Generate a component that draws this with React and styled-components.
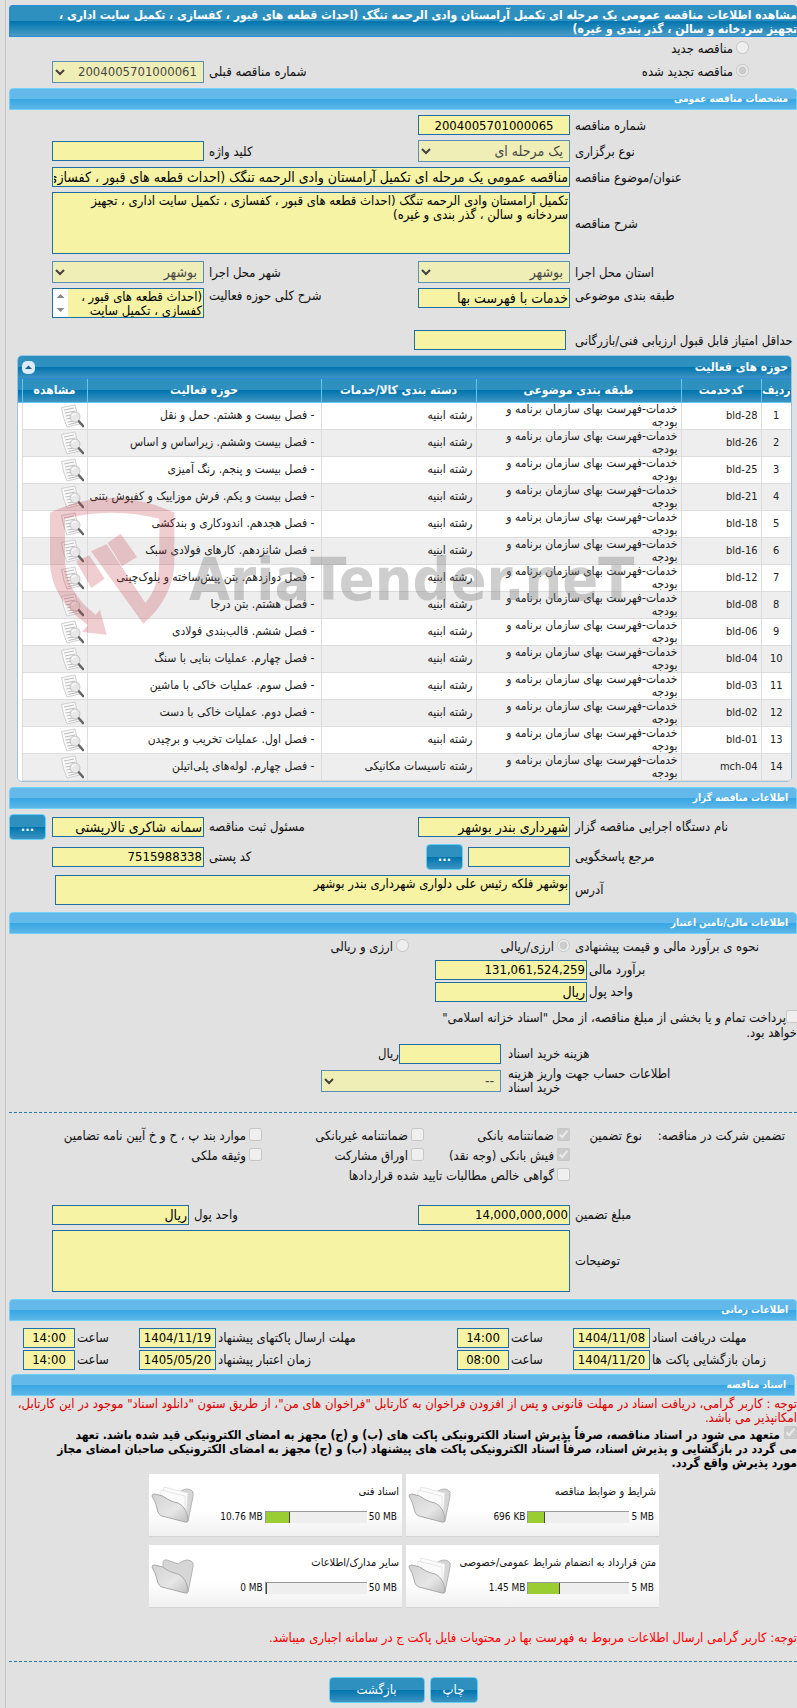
import React from "react";
import styled, { createGlobalStyle } from "styled-components";

const Global = createGlobalStyle`
  * { box-sizing: border-box; }
  body {
    margin: 0;
    background: #e1e1e1;
    color: #111;
    font: 13px/14px Tahoma, "DejaVu Sans Condensed", "DejaVu Sans", sans-serif;
  }
  button, input, select, textarea { font-family: inherit; }
`;

const Page = styled.main`
  direction: rtl;
  margin-left: 5px;
  padding: 5px 0 5px 3px;
  border-left: 1px solid #c6c6c6;
  overflow: hidden;
`;

const Title = styled.h1`
  margin: 0;
  height: 32px;
  padding-top: 2px;
  overflow: hidden;
  border: 1px solid #2a8ad8;
  border-width: 1px 0 1px 1px;
  border-radius: 4px 4px 0 0;
  background: linear-gradient(#2e90bf 50%, #0074ad 50%, #4a9cc6);
  color: #fff;
  font-size: 12px;
  line-height: 14px;
  white-space: nowrap;
`;

const Line = styled.span`
  display: block;
  white-space: nowrap;
`;

const Bar = styled.h2`
  margin: ${(p) => p.$mt}px ${(p) => p.$inset || 0}px 0;
  height: 22px;
  padding: 0 8px;
  border: 1px solid #6fd0f8;
  border-radius: 4px 4px 0 0;
  background: linear-gradient(#63b9ea 50%, #36a6e2 50%, #5cb6e8);
  color: #fff;
  font-size: 10px;
  line-height: 20px;
`;

const Row = styled.div`
  display: grid;
  grid-template-columns: minmax(0, 227fr) 152px minmax(0, 214fr) 152px 43px;
  align-items: ${(p) => p.$align || "center"};
  margin-top: ${(p) => p.$mt || 5}px;
`;

const ScoreRow = styled(Row)`
  grid-template-columns: minmax(0, 231fr) 152px minmax(0, 405fr);
`;

const Label = styled.label`
  padding: 1px 0 0 ${(p) => p.$gap || 5}px;
  text-align: left;
  white-space: nowrap;
`;

const field = `
  width: 100%;
  margin: 0;
  border: 1px solid #1f6fa5;
  border-radius: 0;
  background: #f6f4a4;
  color: #000;
`;

const Input = styled.input`
  ${field}
  height: 20px;
  padding: 0 1px;
  font-size: ${(p) => (/[ا-ی]/.test(p.value) ? 14 : 13)}px;
  text-align: ${(p) => p.$align || "right"};
  width: ${(p) => (p.$w ? p.$w + "px" : "100%")};
`;

const Select = styled.select`
  ${field}
  height: 22px;
  padding: 0 2px;
  font-size: ${(p) => (p.$latin ? 13 : 14)}px;
  opacity: 0.7;
`;

const Area = styled.textarea`
  ${field}
  display: block;
  height: ${(p) => p.$h}px;
  padding: 1px;
  font-size: 13px;
  line-height: 14px;
  resize: none;
  overflow: hidden;
`;

const Wide = styled.div`
  grid-column: 2 / 5;
  margin-left: ${(p) => p.$pull || 0}px;
`;

const ScrollBox = styled.div`
  ${field}
  display: flex;
  height: 30px;
  textarea {
    flex: 1;
    min-width: 0;
    height: 28px;
    border: 0;
  }
`;

const Arrows = styled.svg`
  flex: none;
  width: 15px;
  height: 28px;
  background: #fff;
`;

const Choice = styled.label`
  display: flex;
  align-items: center;
  gap: ${(p) => p.$gap ?? 3}px;
  padding-right: ${(p) => p.$pr || 0}px;
  white-space: nowrap;
  input {
    flex: none;
    width: 13px;
    height: 13px;
    margin: 0 0 3px;
  }
`;

const TopRows = styled.div`
  display: grid;
  grid-template-columns: minmax(0, 379fr) minmax(0, 214fr) 152px 43px;
  align-items: center;
  grid-auto-rows: 23px;
  > :first-child, > :nth-child(2) { padding-right: 48px; grid-column: 1; }
`;

const Grid = styled.section`
  position: relative;
  margin: 5px 5px 0 8px;
  border: 1px solid #9cc4e2;
  border-radius: 5px;
  overflow: hidden;
  background: #fff;
`;

const blue = "linear-gradient(#2e90bf 50%, #0074ad 50%, #3d93c2)";

const GridHead = styled.header`
  display: flex;
  align-items: center;
  justify-content: space-between;
  height: 23px;
  padding: 0 3px 0 4px;
  border-bottom: 1px solid #2a8ad8;
  background: ${blue};
  color: #fff;
  h3 { margin: 0; font-size: 12px; }
`;

const Collapse = styled.button`
  width: 13px;
  height: 13px;
  padding: 0;
  border: 0;
  border-radius: 5px;
  background: #dceaf8;
  svg { display: block; }
`;

const Table = styled.table`
  width: 100%;
  table-layout: fixed;
  border-collapse: collapse;
  font-size: 12px;
  line-height: 13px;
  th {
    height: 23px;
    padding: 0;
    border-left: 1px solid #62c6f0;
    border-bottom: 1px solid #62c6f0;
    background: ${blue};
    color: #fff;
    white-space: nowrap;
  }
  td {
    height: 27px;
    padding: 0 3px;
    border-left: 1px solid #dcdcdc;
    border-bottom: 1px solid #dcdcdc;
    color: #222;
  }
  tbody tr:nth-child(even) td { background: #eeeeee; }
  th:last-child, td:last-child { border-left: 0; }
  tbody tr td:last-child { background: #fff; border-bottom: 0; padding: 0; }
  td:first-child { text-align: center; font-size: 11px; }
  td:nth-child(2) { direction: ltr; text-align: right; font-size: 11px; }
  td:nth-child(3) { padding-left: 24px; }
  td:nth-child(5) { padding-right: 6px; white-space: nowrap; }
`;

const ViewButton = styled.button`
  display: block;
  margin: 0;
  padding: 0;
  border: 0;
  background: none;
  svg { display: block; }
`;

const Watermark = styled.svg`
  position: absolute;
  left: 28px;
  top: 140px;
  width: 620px;
  height: 150px;
  pointer-events: none;
`;

const Button = styled.button`
  width: ${(p) => p.$w}px;
  height: 26px;
  padding: 0;
  border: 1px solid #66cff5;
  border-radius: 4px;
  background: linear-gradient(#2e90bf 50%, #0074ad 50%, #3d93c2);
  color: #fff;
  font-size: 13px;
  font-weight: ${(p) => (p.$bold ? 700 : 400)};
`;

const ButtonCell = styled.div`
  display: flex;
  justify-content: ${(p) => (p.$end ? "flex-end" : "flex-start")};
  align-items: center;
  gap: 5px;
`;

const MoneyRow = styled.div`
  display: grid;
  grid-template-columns: minmax(0, 210fr) 152px minmax(0, 426fr);
  align-items: center;
  margin-top: ${(p) => p.$mt}px;
`;

const CostRow = styled.div`
  display: grid;
  grid-template-columns: minmax(0, 296fr) 180px minmax(0, 312fr);
  align-items: center;
  margin-top: ${(p) => p.$mt}px;
`;

const CostLabel = styled.label`
  width: 170px;
  margin-right: auto;
  padding-left: 7px;
  text-align: left;
`;

const CostField = styled.div`
  display: flex;
  align-items: center;
`;

const Treasury = styled.div`
  margin-top: 8px;
  height: 29px;
  label { margin-right: -2px; }
`;

const Dashes = styled.hr`
  height: 0;
  margin: ${(p) => p.$mt}px 0 0;
  border: 0;
  border-top: 1px dashed #2a7ab0;
`;

const Guarantee = styled.fieldset`
  display: grid;
  grid-template-columns: minmax(0, 139fr) 88px 146px 162px minmax(0, 253fr);
  grid-auto-rows: 20px;
  margin: 13px 0 0;
  padding: 0;
  border: 0;
  white-space: nowrap;
  > strong { font-weight: 400; padding-right: 12px; line-height: 20px; }
  > span { padding-right: 16px; line-height: 20px; }
  ${Choice}:nth-of-type(4) { grid-column: 3; }
  ${Choice}:nth-of-type(7) { grid-column: 3; }
`;

const PledgeRow = styled(Row)`
  grid-template-columns: minmax(0, 227fr) 152px minmax(0, 229fr) 137px 43px;
`;

const TimeRow = styled.div`
  display: grid;
  grid-template-columns:
    minmax(0, 147fr) 77px minmax(0, 64fr) 52px minmax(0, 241fr) 77px
    minmax(0, 64fr) 52px 14px;
  align-items: center;
  margin-top: ${(p) => p.$mt}px;
`;

const Notice = styled.p`
  margin: ${(p) => p.$mt}px 0 0;
  color: ${(p) => p.$color};
`;

const Pledge = styled.label`
  display: block;
  margin-top: 1px;
  font-size: 12px;
  font-weight: 700;
  color: #000;
  input {
    width: 13px;
    height: 13px;
    margin: 0 0 0 4px;
    vertical-align: 0;
  }
`;

const Cards = styled.div`
  display: grid;
  grid-template-columns: 253px 253px;
  gap: 8px 4px;
  justify-content: center;
  margin: 4px 0 0 0;
  padding-right: 20px;
  padding-left: 22px;
`;

const Card = styled.article`
  display: flex;
  justify-content: space-between;
  height: 63px;
  padding: 11px 3px 0 2px;
  border-bottom: 1px solid #d4d4d4;
  background: linear-gradient(#fff 60%, #f0f0f0);
  font-size: 11px;
  h4 { margin: 0 0 12px; font: inherit; line-height: 14px; white-space: nowrap; }
`;

const Usage = styled.div`
  display: flex;
  align-items: center;
  gap: 2px;
  direction: ltr;
  justify-content: flex-end;
  font-size: 10px;
  line-height: 12px;
  padding-right: 2px;
`;

const Track = styled.div`
  width: 102px;
  height: 12px;
  border-top: 1px solid #999;
  border-left: 1px solid #999;
  background: #eee;
`;

const Fill = styled.div`
  height: 11px;
  border-right: 1px solid #444;
  background: #9acd32;
`;

const Footer = styled.footer`
  display: flex;
  justify-content: center;
  gap: 5px;
  margin-top: 15px;
`;

const P = "خدمات-فهرست بهای سازمان برنامه و بودجه";
const A = "رشته ابنیه";
const rows = [
  ["bld-28", A, "فصل بیست و هشتم. حمل و نقل"],
  ["bld-26", A, "فصل بیست وششم. زیراساس و اساس"],
  ["bld-25", A, "فصل بیست و پنجم. رنگ آمیزی"],
  ["bld-21", A, "فصل بیست و یکم. فرش موزاییک و کفپوش بتنی"],
  ["bld-18", A, "فصل هجدهم. اندودکاری و بندکشی"],
  ["bld-16", A, "فصل شانزدهم. کارهای فولادی سبک"],
  ["bld-12", A, "فصل دوازدهم. بتن پیش‌ساخته و بلوک‌چینی"],
  ["bld-08", A, "فصل هشتم. بتن درجا"],
  ["bld-06", A, "فصل ششم. قالب‌بندی فولادی"],
  ["bld-04", A, "فصل چهارم. عملیات بنایی با سنگ"],
  ["bld-03", A, "فصل سوم. عملیات خاکی با ماشین"],
  ["bld-02", A, "فصل دوم. عملیات خاکی با دست"],
  ["bld-01", A, "فصل اول. عملیات تخریب و برچیدن"],
  ["mch-04", "رشته تاسیسات مکانیکی", "فصل چهارم. لوله‌های پلی‌اتیلن"],
];

const cards = [
  ["شرایط و ضوابط مناقصه", "5 MB", "696 KB", 16, true],
  ["اسناد فنی", "50 MB", "10.76 MB", 24, true],
  ["متن قرارداد به انضمام شرایط عمومی/خصوصی", "5 MB", "1.45 MB", 31, true],
  ["سایر مدارک/اطلاعات", "50 MB", "0 MB", 1, false],
];

const ViewIcon = () => (
  <svg width="24" height="24" viewBox="0 0 24 24" fill="none">
    <path d="M1.500 3.500 L15 1 Q17 10 20 20 L7 23 Q3 14 1.500 3.500Z" fill="#fafafa" stroke="#c4c4c4" strokeWidth=".8" />
    <path d="M4 6l10-2M5 9l10-2M5.500 12l6-1M6.500 15l5-1M7.500 18l6-1M8.500 20.500l9-2" stroke="#b4b4b4" strokeWidth=".9" />
    <circle cx="15" cy="13" r="5" fill="#e6e6e6" fillOpacity=".9" stroke="#bbb" strokeWidth=".8" />
    <path d="M12 12q1-3 4-2" stroke="#fff" strokeWidth="1.200" />
    <path d="M19 17.500l4 4.500" stroke="#666" strokeWidth="2.600" strokeLinecap="round" />
  </svg>
);

const Folder = ({ papers }) => (
  <svg width="46" height="46" viewBox="0 0 46 46">
    <defs>
      <linearGradient id="folderFront" x1="0" y1="0" x2="1" y2="1">
        <stop offset="0" stopColor="#d2d2d2" />
        <stop offset=".6" stopColor="#e6e6e6" />
        <stop offset="1" stopColor="#bdbdbd" />
      </linearGradient>
    </defs>
    <path d="M12 6 Q13 3 16 4 L27 8 Q35 2 40 5 Q43 6 42 11 L37 36 L13 28Z" fill="#d6d6d6" stroke="#b4b4b4" />
    {papers && (
      <g fill="#fbfbfb" stroke="#dcdcdc" strokeWidth=".7">
        <path d="M13 2 L37 8 L35 31 L9 22Z" />
        <path d="M10 5 L34 11 L34 31 L9 22Z" />
      </g>
    )}
    <path d="M1 11 Q1 9 4 9 Q12 10 18 15 Q22 17 27 18 Q36 22 37 35 Q37 38 34 37 L11 31 Q8 30 7 27 Q5 17 1 11Z" fill="url(#folderFront)" stroke="#a9a9a9" />
  </svg>
);

function Pick({ id, latin, children }) {
  return (
    <Select id={id} $latin={latin} disabled>
      <option>{children}</option>
    </Select>
  );
}

export default function App() {
  return (
    <Page>
      <Global />
      <Title>
        <Line>مشاهده اطلاعات مناقصه عمومی یک مرحله ای تکمیل آرامستان وادی الرحمه تنگک (احداث قطعه های قبور ، کفسازی ، تکمیل سایت اداری ،</Line>
        <Line>تجهیز سردخانه و سالن ، گذر بندی و غیره)</Line>
      </Title>
      <TopRows>
        <Choice><input type="radio" name="kind" disabled />مناقصه جدید</Choice>
        <Choice><input type="radio" name="kind" disabled defaultChecked />مناقصه تجدید شده</Choice>
        <Label htmlFor="prev">شماره مناقصه قبلی</Label>
        <Pick id="prev" latin>2004005701000061</Pick>
      </TopRows>

      <Bar $mt={5}>مشخصات مناقصه عمومی</Bar>
      <Row>
        <Label htmlFor="num">شماره مناقصه</Label>
        <Input id="num" readOnly $align="center" value="2004005701000065" />
      </Row>
      <Row>
        <Label htmlFor="type">نوع برگزاری</Label>
        <Pick id="type">یک مرحله ای</Pick>
        <Label htmlFor="key">کلید واژه</Label>
        <Input id="key" readOnly value="" />
      </Row>
      <Row>
        <Label htmlFor="subject">عنوان/موضوع مناقصه</Label>
        <Wide>
          <Input id="subject" readOnly value="مناقصه عمومی یک مرحله ای تکمیل آرامستان وادی الرحمه تنگک (احداث قطعه های قبور ، کفسازی ، تکمیل سایت اداری ، تجهیز سردخانه و سالن ، گذر بندی و غیره)" />
        </Wide>
      </Row>
      <Row>
        <Label htmlFor="desc">شرح مناقصه</Label>
        <Wide>
          <Area id="desc" readOnly $h={62} value="تکمیل آرامستان وادی الرحمه تنگک (احداث قطعه های قبور ، کفسازی ، تکمیل سایت اداری ، تجهیز سردخانه و سالن ، گذر بندی و غیره)" />
        </Wide>
      </Row>
      <Row $mt={7}>
        <Label htmlFor="prov">استان محل اجرا</Label>
        <Pick id="prov">بوشهر</Pick>
        <Label htmlFor="city">شهر محل اجرا</Label>
        <Pick id="city">بوشهر</Pick>
      </Row>
      <Row $align="start">
        <Label htmlFor="cat">طبقه بندی موضوعی</Label>
        <Input id="cat" readOnly value="خدمات با فهرست بها" />
        <Label htmlFor="scope">شرح کلی حوزه فعالیت</Label>
        <ScrollBox>
          <Area id="scope" readOnly $h={28} value={"(احداث قطعه های قبور ،\nکفسازی ، تکمیل سایت"} />
          <Arrows viewBox="0 0 15 28">
            <path d="M3.500 9 L7.500 5 L11.500 9Z M3.500 19 L7.500 23 L11.500 19Z" fill="#8a8a8a" />
          </Arrows>
        </ScrollBox>
      </Row>
      <ScoreRow $mt={12}>
        <Label $gap={9} htmlFor="score">حداقل امتیاز قابل قبول ارزیابی فنی/بازرگانی</Label>
        <Input id="score" readOnly value="" />
      </ScoreRow>

      <Grid>
        <GridHead>
          <h3>حوزه های فعالیت</h3>
          <Collapse aria-label="بستن">
            <svg width="13" height="13" viewBox="0 0 13 13"><path d="M3 8 L6.500 4.500 L10 8Z" fill="#1b5f96" /></svg>
          </Collapse>
        </GridHead>
        <Table>
          <colgroup>
            <col style={{ width: 30 }} /><col style={{ width: 80 }} /><col style={{ width: 205 }} />
            <col style={{ width: 155 }} /><col /><col style={{ width: 65 }} /><col style={{ width: 4 }} />
          </colgroup>
          <thead>
            <tr>
              <th>ردیف</th><th>کدخدمت</th><th>طبقه بندی موضوعی</th><th>دسته بندی کالا/خدمات</th>
              <th>حوزه فعالیت</th><th>مشاهده</th><th />
            </tr>
          </thead>
          <tbody>
            {rows.map(([code, group, text], i) => (
              <tr key={code}>
                <td>{i + 1}</td><td>{code}</td><td>{P}</td><td>{group}</td><td>- {text}</td>
                <td><ViewButton aria-label="مشاهده"><ViewIcon /></ViewButton></td>
                <td />
              </tr>
            ))}
          </tbody>
        </Table>
        <Watermark viewBox="0 0 620 150">
          <g transform="translate(4 2) scale(.3333) translate(-150 -450)" fill="#c0303c" fillOpacity=".24">
            <path d="M150 494 Q240 450 335 450 Q430 450 523 494 L523 650 Q516 752 430 827 L273 610 L320 588 L436 765 Q478 715 478 640 L478 512 Q410 494 335 494 Q260 494 195 512 L195 640 Q200 735 287 800 L300 785 L320 860 L246 852 L264 832 Q150 750 150 640Z" />
            <path d="M323 585 L362 557 L411 627 L366 655Z M228 640 L268 622 L314 692 L274 720Z" />
          </g>
          <text x="143" y="104" fill="#777" fillOpacity=".36" fontFamily="'DejaVu Sans Condensed', 'DejaVu Sans', sans-serif" fontWeight="700" fontSize="59" direction="ltr">AriaTender.neT</text>
        </Watermark>
      </Grid>

      <Bar $mt={5}>اطلاعات مناقصه گزار</Bar>
      <Row $mt={5}>
        <Label htmlFor="org">نام دستگاه اجرایی مناقصه گزار</Label>
        <Input id="org" readOnly value="شهرداری بندر بوشهر" />
        <Label htmlFor="reg">مسئول ثبت مناقصه</Label>
        <Input id="reg" readOnly value="سمانه شاکری تالارپشتی" />
        <ButtonCell $end><Button $w={37} $bold>...</Button></ButtonCell>
      </Row>
      <Row $mt={4}>
        <Label htmlFor="resp">مرجع پاسخگویی</Label>
        <ButtonCell>
          <Input id="resp" readOnly $w={102} value="" />
          <Button $w={37} $bold>...</Button>
        </ButtonCell>
        <Label htmlFor="zip">کد پستی</Label>
        <Input id="zip" readOnly value="7515988338" />
      </Row>
      <Row $mt={5}>
        <Label htmlFor="addr">آدرس</Label>
        <Wide $pull={3}>
          <Area id="addr" readOnly $h={30} value="بوشهر فلکه رئیس علی دلواری شهرداری بندر بوشهر" />
        </Wide>
      </Row>

      <Bar $mt={7}>اطلاعات مالی/تامین اعتبار</Bar>
      <Row $mt={5}>
        <Label as="span">نحوه ی برآورد مالی و قیمت پیشنهادی</Label>
        <Choice><input type="radio" name="cur" disabled defaultChecked />ارزی/ریالی</Choice>
        <Choice $pr={9}><input type="radio" name="cur" disabled />ارزی و ریالی</Choice>
      </Row>
      <MoneyRow $mt={5}>
        <Label $gap={2} htmlFor="est">برآورد مالی</Label>
        <Input id="est" readOnly value="131,061,524,259" />
      </MoneyRow>
      <MoneyRow $mt={2}>
        <Label $gap={2} htmlFor="unit">واحد پول</Label>
        <Input id="unit" readOnly value="ریال" />
      </MoneyRow>
      <Treasury>
        <Choice $gap={0}><input type="checkbox" disabled />پرداخت تمام و یا بخشی از مبلغ مناقصه، از محل "اسناد خزانه اسلامی"</Choice>
        خواهد بود.
      </Treasury>
      <CostRow $mt={5}>
        <CostLabel htmlFor="cost">هزینه خرید اسناد</CostLabel>
        <CostField><Input id="cost" readOnly $w={102} value="" />ریال</CostField>
      </CostRow>
      <CostRow $mt={3}>
        <CostLabel htmlFor="acct"><Line>اطلاعات حساب جهت واریز هزینه</Line><Line>خرید اسناد</Line></CostLabel>
        <Pick id="acct">--</Pick>
      </CostRow>

      <Dashes $mt={17} />
      <Guarantee>
        <strong>تضمین شرکت در مناقصه:</strong>
        <span>نوع تضمین</span>
        <Choice><input type="checkbox" disabled defaultChecked />ضمانتنامه بانکی</Choice>
        <Choice><input type="checkbox" disabled />ضمانتنامه غیربانکی</Choice>
        <Choice><input type="checkbox" disabled />موارد بند پ ، ح و خ آیین نامه تضامین</Choice>
        <Choice><input type="checkbox" disabled defaultChecked />فیش بانکی (وجه نقد)</Choice>
        <Choice><input type="checkbox" disabled />اوراق مشارکت</Choice>
        <Choice><input type="checkbox" disabled />وثیقه ملکی</Choice>
        <Choice><input type="checkbox" disabled />گواهی خالص مطالبات تایید شده قراردادها</Choice>
      </Guarantee>
      <PledgeRow $mt={19}>
        <Label htmlFor="amt">مبلغ تضمین</Label>
        <Input id="amt" readOnly value="14,000,000,000" />
        <Label htmlFor="unit2">واحد پول</Label>
        <Input id="unit2" readOnly value="ریال" />
      </PledgeRow>
      <Row>
        <Label htmlFor="notes">توضیحات</Label>
        <Wide><Area id="notes" readOnly $h={62} value="" /></Wide>
      </Row>

      <Bar $mt={7}>اطلاعات زمانی</Bar>
      <TimeRow $mt={7}>
        <Label $gap={2} htmlFor="d1">مهلت دریافت اسناد</Label>
        <Input id="d1" readOnly $align="center" value="1404/11/08" />
        <Label $gap={2} htmlFor="t1">ساعت</Label>
        <Input id="t1" readOnly $align="center" value="14:00" />
        <Label $gap={2} htmlFor="d2">مهلت ارسال پاکتهای پیشنهاد</Label>
        <Input id="d2" readOnly $align="center" value="1404/11/19" />
        <Label $gap={2} htmlFor="t2">ساعت</Label>
        <Input id="t2" readOnly $align="center" value="14:00" />
      </TimeRow>
      <TimeRow $mt={2}>
        <Label $gap={2} htmlFor="d3">زمان بازگشایی پاکت ها</Label>
        <Input id="d3" readOnly $align="center" value="1404/11/20" />
        <Label $gap={2} htmlFor="t3">ساعت</Label>
        <Input id="t3" readOnly $align="center" value="08:00" />
        <Label $gap={2} htmlFor="d4">زمان اعتبار پیشنهاد</Label>
        <Input id="d4" readOnly $align="center" value="1405/05/20" />
        <Label $gap={2} htmlFor="t4">ساعت</Label>
        <Input id="t4" readOnly $align="center" value="14:00" />
      </TimeRow>

      <Bar $mt={4} $inset={2}>اسناد مناقصه</Bar>
      <Notice $mt={1} $color="#d00">
        <Line>توجه : کاربر گرامی، دریافت اسناد در مهلت قانونی و پس از افزودن فراخوان به کارتابل "فراخوان های من"، از طریق ستون "دانلود اسناد" موجود در این کارتابل،</Line>
        <Line>امکانپذیر می باشد.</Line>
      </Notice>
      <Pledge>
        <Line><input type="checkbox" disabled defaultChecked />متعهد می شود در اسناد مناقصه، صرفاً پذیرش اسناد الکترونیکی پاکت های (ب) و (ج) مجهز به امضای الکترونیکی قید شده باشد. تعهد</Line>
        <Line>می گردد در بازگشایی و پذیرش اسناد، صرفاً اسناد الکترونیکی پاکت های پیشنهاد (ب) و (ج) مجهز به امضای الکترونیکی صاحبان امضای مجاز</Line>
        <Line>مورد پذیرش واقع گردد.</Line>
      </Pledge>
      <Cards>
        {cards.map(([title, max, used, pct, papers]) => (
          <Card key={title}>
            <div>
              <h4>{title}</h4>
              <Usage>
                <span>{used}</span>
                <Track><Fill style={{ width: pct + "%" }} /></Track>
                <span>{max}</span>
              </Usage>
            </div>
            <Folder papers={papers} />
          </Card>
        ))}
      </Cards>
      <Notice $mt={23} $color="#f00">
        <Line>توجه: کاربر گرامی ارسال اطلاعات مربوط به فهرست بها در محتویات فایل پاکت ج در سامانه اجباری میباشد.</Line>
      </Notice>
      <Dashes $mt={16} />
      <Footer>
        <Button $w={48}>چاپ</Button>
        <Button $w={96}>بازگشت</Button>
      </Footer>
    </Page>
  );
}
